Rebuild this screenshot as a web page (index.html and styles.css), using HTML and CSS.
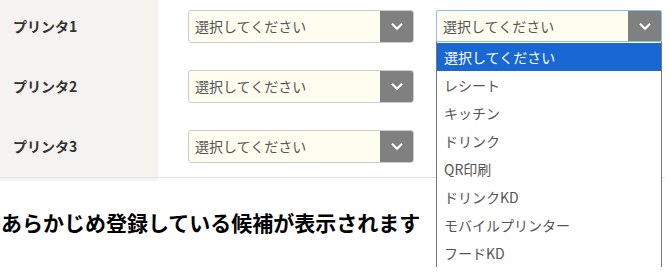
FILE: index.html
```html
<!DOCTYPE html>
<html lang="ja">
<head>
    <meta charset="UTF-8">
    <title>プリンタ設定</title>
    <link rel="stylesheet" href="styles.css">
</head>
<body>

<div class="form">
    <div class="row">
        <div class="label">プリンタ1</div>
        <div class="cell">
            <div class="select">
                <span class="select_text">選択してください</span>
                <span class="select_arrow"><svg width="14" height="9" viewBox="0 0 14 9"><path d="M2 1.8 L7 6.8 L12 1.8" fill="none" stroke="#fff" stroke-width="2.2"/></svg></span>
            </div>
            <div class="select_wrap">
                <div class="select select_open">
                    <span class="select_text">選択してください</span>
                    <span class="select_arrow"><svg width="14" height="9" viewBox="0 0 14 9"><path d="M2 1.8 L7 6.8 L12 1.8" fill="none" stroke="#fff" stroke-width="2.2"/></svg></span>
                </div>
                <ul class="option_list">
                    <li class="option option_active">選択してください</li>
                    <li class="option">レシート</li>
                    <li class="option">キッチン</li>
                    <li class="option">ドリンク</li>
                    <li class="option">QR印刷</li>
                    <li class="option">ドリンクKD</li>
                    <li class="option">モバイルプリンター</li>
                    <li class="option">フードKD</li>
                </ul>
            </div>
        </div>
    </div>
    <div class="row">
        <div class="label">プリンタ2</div>
        <div class="cell">
            <div class="select">
                <span class="select_text">選択してください</span>
                <span class="select_arrow"><svg width="14" height="9" viewBox="0 0 14 9"><path d="M2 1.8 L7 6.8 L12 1.8" fill="none" stroke="#fff" stroke-width="2.2"/></svg></span>
            </div>
        </div>
    </div>
    <div class="row row_last">
        <div class="label">プリンタ3</div>
        <div class="cell">
            <div class="select">
                <span class="select_text">選択してください</span>
                <span class="select_arrow"><svg width="14" height="9" viewBox="0 0 14 9"><path d="M2 1.8 L7 6.8 L12 1.8" fill="none" stroke="#fff" stroke-width="2.2"/></svg></span>
            </div>
        </div>
    </div>
</div>
<div class="form_tail"></div>

<p class="note">あらかじめ登録している候補が表示されます</p>

</body>
</html>
```

FILE: styles.css
```css
html, body {
    min-height: 276px;
}

body {
    margin: 0;
    background-color: #ffffff;
    font-family: "Noto Sans CJK JP", "Noto Sans", sans-serif;
    color: #333333;
}

.form {
    width: 665px;
    border-bottom: 1px solid #e2e2e2;
}

.row {
    display: flex;
    height: 60px;
}

.row_last {
    height: 57px;
}

.label {
    width: 145px;
    padding: 10px 0 0 13px;
    line-height: 33px;
    background-color: #f4f3ef;
    font-size: 14px;
    font-weight: bold;
    color: #333333;
}

.cell {
    display: flex;
    gap: 22px;
    padding: 10px 0 0 30px;
}

.select {
    display: flex;
    width: 226px;
    height: 33px;
    box-sizing: border-box;
    border: 1px solid #cccccc;
    border-radius: 3px;
    background-color: #fffdf0;
    overflow: hidden;
}

.select_text {
    flex: 1;
    padding-left: 6px;
    font-size: 14px;
    line-height: 31px;
    color: #555555;
}

.select_arrow {
    width: 33px;
    display: flex;
    align-items: center;
    justify-content: center;
    background-color: #808080;
}

.select_wrap {
    position: relative;
}

.select_open {
    height: 32px;
    border-color: #8dbde8;
    border-radius: 2px;
}

.select_open .select_text {
    line-height: 30px;
}

.option_list {
    position: absolute;
    left: 0;
    top: 31px;
    width: 226px;
    box-sizing: border-box;
    margin: 0;
    padding: 1px 0 0 0;
    list-style: none;
    background-color: #ffffff;
    border-left: 1px solid #767676;
    border-right: 1px solid #767676;
    border-top: 1px solid #8dbde8;
    z-index: 2;
}

.option {
    height: 28px;
    line-height: 28px;
    padding-left: 7px;
    font-size: 14px;
    color: #555555;
}

.option_active {
    background-color: #1967d2;
    color: #ffffff;
}

.form_tail {
    width: 158px;
    height: 3px;
    background-color: #f4f3ef;
}

.note {
    margin: 27px 0 0 1px;
    font-size: 21px;
    font-weight: bold;
    color: #000000;
    line-height: 28px;
}
```
